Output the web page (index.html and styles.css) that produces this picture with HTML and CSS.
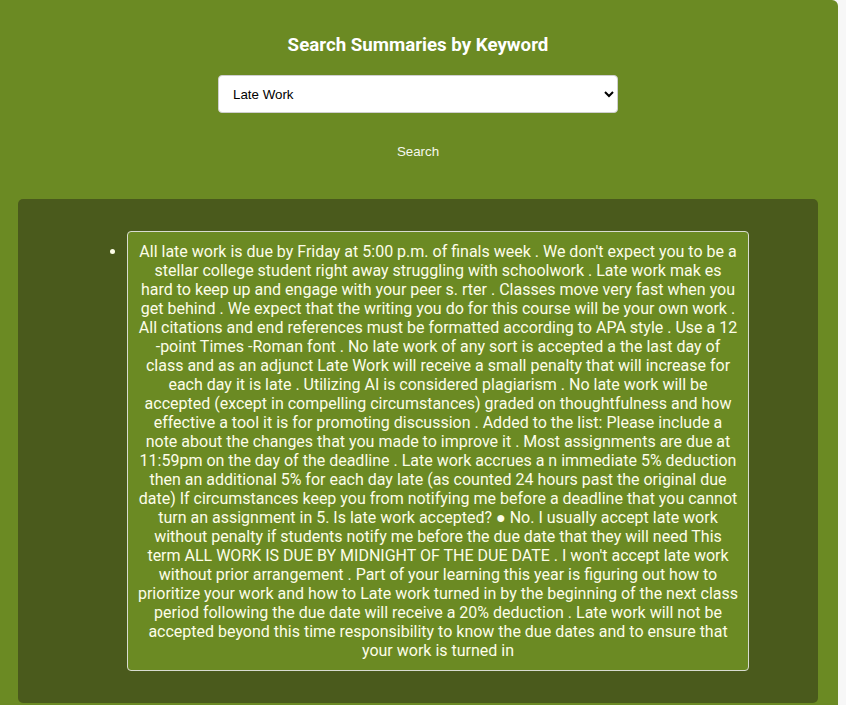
FILE: index.html
```html
<!DOCTYPE html>
<html lang="en">
<head>
<meta charset="utf-8">
<title>Search Summaries by Keyword</title>
<link rel="stylesheet" href="styles.css">
</head>
<body>
<div class="page">
  <h3 class="title">Search Summaries by Keyword</h3>
  <div class="select-row">
    <select class="keyword">
      <option>Late Work</option>
    </select>
  </div>
  <button class="search-btn" type="button">Search</button>
  <div class="results">
    <ul class="result-list">
      <li class="result-item">
        <div class="card">All late work is due by Friday at 5:00 p.m. of finals week . We don't expect you to be a stellar college student right away struggling with schoolwork . Late work mak es hard to keep up and engage with your peer s. rter . Classes move very fast when you get behind . We expect that the writing you do for this course will be your own work . All citations and end references must be formatted according to APA style . Use a 12 -point Times -Roman font . No late work of any sort is accepted a the last day of class and as an adjunct Late Work will receive a small penalty that will increase for each day it is late . Utilizing AI is considered plagiarism . No late work will be accepted (except in compelling circumstances) graded on thoughtfulness and how effective a tool it is for promoting discussion . Added to the list: Please include a note about the changes that you made to improve it . Most assignments are due at 11:59pm on the day of the deadline . Late work accrues a n immediate 5% deduction then an additional 5% for each day late (as counted 24 hours past the original due date) If circumstances keep you from notifying me before a deadline that you cannot turn an assignment in 5. Is late work accepted? ● No. I usually accept late work without penalty if students notify me before the due date that they will need This term ALL WORK IS DUE BY MIDNIGHT OF THE DUE DATE . I won't accept late work without prior arrangement . Part of your learning this year is figuring out how to prioritize your work and how to Late work turned in by the beginning of the next class period following the due date will receive a 20% deduction . Late work will not be accepted beyond this time responsibility to know the due dates and to ensure that your work is turned in</div>
      </li>
    </ul>
  </div>
</div>
</body>
</html>
```

FILE: styles.css
```css
html, body {
  margin: 0;
  padding: 0;
}

body {
  background: #f7f7f7;
  font-family: Roboto, "Liberation Sans", Arial, sans-serif;
}

.page {
  box-sizing: border-box;
  width: 838px;
  min-height: 705px;
  background: #6b8a23;
  padding: 34px 20px 3px 18px;
  border-top-right-radius: 6px;
}

.title {
  margin: 0 0 19px;
  font-family: Roboto, "Liberation Sans", sans-serif;
  font-weight: 700;
  font-size: 18.72px;
  line-height: 22px;
  color: #ffffff;
  text-align: center;
}

.select-row {
  display: flex;
  justify-content: center;
}

.keyword {
  box-sizing: border-box;
  width: 400px;
  height: 38px;
  padding: 0 10px;
  font-family: Arial, "Liberation Sans", sans-serif;
  font-size: 13.33px;
  color: #000;
  background: #ffffff;
  border: 1px solid #cfcfcf;
  border-radius: 4px;
}

.search-btn {
  display: block;
  margin: 21px auto 30px;
  padding: 10px 20px;
  background: transparent;
  border: none;
  font-family: Arial, "Liberation Sans", sans-serif;
  font-size: 13.33px;
  line-height: 15px;
  color: #f6f8ee;
}

.results {
  background: #4a5a1c;
  border-radius: 5px;
  padding: 16px;
}

.result-list {
  margin: 16px 0;
  padding: 0 0 0 40px;
  display: flex;
  flex-direction: column;
  align-items: center;
  color: #fdfde8;
}

.result-item {
  display: list-item;
  font-size: 16px;
  line-height: 19px;
}

.card {
  max-width: 600.25px;
  padding: 10px 9.875px;
  border: 1px solid #d8dcd0;
  border-radius: 4px;
  background: #6b8a23;
  color: #fdfde8;
  text-align: center;
  font-family: Roboto, "Liberation Sans", sans-serif;
  font-size: 16px;
  line-height: 19px;
}
```
